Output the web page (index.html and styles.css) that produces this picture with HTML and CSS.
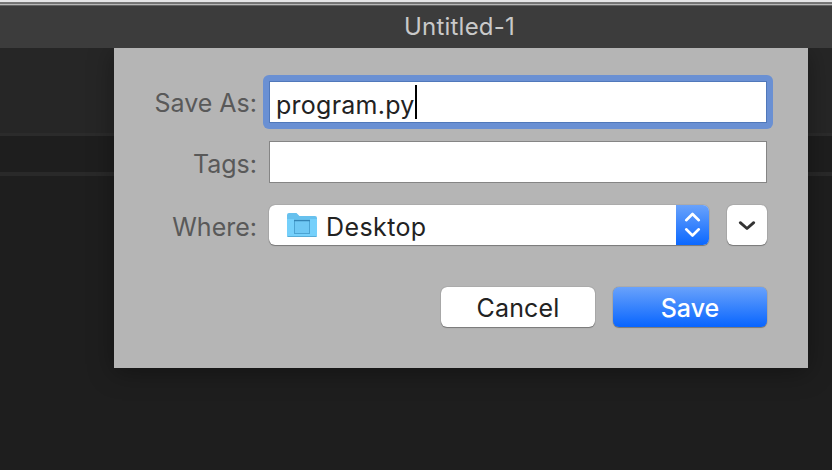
FILE: index.html
```html
<!DOCTYPE html>
<html lang="en">
<head>
<meta charset="utf-8">
<title>Untitled-1</title>
<link rel="stylesheet" href="styles.css">
</head>
<body>
<div class="window">
  <div class="menubar-edge"></div>
  <header class="titlebar"><span class="title">Untitled-1</span></header>
  <main class="editor">
    <form class="sheet">
      <div class="row">
        <span class="label label-save">Save As:</span>
        <div class="field focused"><span class="filename">program.py</span><span class="caret"></span></div>
      </div>
      <div class="row row-tags">
        <span class="label label-tags">Tags:</span>
        <div class="field"></div>
      </div>
      <div class="row row-where">
        <span class="label label-where">Where:</span>
        <div class="popup">
          <svg class="folder" width="32" height="28" viewBox="0 0 32 28">
            <path d="M1 4Q1 2 3 2H10.500L13.500 5H29Q31 5 31 7V24Q31 26 29 26H3Q1 26 1 24Z" fill="#67c1ee"/>
            <path d="M1 8H31V24Q31 26 29 26H3Q1 26 1 24Z" fill="#75d0fb"/>
            <path d="M1.500 25.500H30.500" stroke="#57acd7"/>
            <rect x="8.500" y="9.500" width="15" height="13" fill="#6fc8f4" stroke="#4ba3d2"/>
            <path d="M8 9.500H24" stroke="#3485b5" stroke-width="1.500"/>
          </svg>
          <span class="location">Desktop</span>
          <span class="stepper">
            <svg width="33" height="40" viewBox="0 0 33 40" fill="none" stroke="#fff" stroke-width="2.600" stroke-linecap="round" stroke-linejoin="round">
              <path d="M10.200 15.200L16.500 9L22.800 15.200M10.200 24.300L16.500 30.500L22.800 24.300"/>
            </svg>
          </span>
        </div>
        <div class="disclosure">
          <svg width="40" height="40" viewBox="0 0 40 40" fill="none" stroke="#333" stroke-width="2.900" stroke-linecap="round" stroke-linejoin="round">
            <path d="M13.300 17.700L20 23.500L26.700 17.700"/>
          </svg>
        </div>
      </div>
      <div class="actions">
        <div class="button"><span class="cancel-text">Cancel</span></div>
        <div class="button primary"><span class="save-text">Save</span></div>
      </div>
    </form>
  </main>
</div>
</body>
</html>
```
FILE: styles.css
```css
* { box-sizing: border-box; }
body {
  margin: 0;
  font-family: Inter, "Liberation Sans", sans-serif;
  font-size: 25px;
  line-height: 30px;
  background: #1e1e1e;
}
.window {
  height: 470px;
  display: flex;
  flex-direction: column;
  overflow: hidden;
}
.menubar-edge {
  height: 6px;
  background: linear-gradient(#e6e6e8 0 2px, #777 2px 3px, #737373 3px 4px, #b9b9b9 4px 5px, #656565 5px 6px);
}
.titlebar {
  height: 42px;
  display: flex;
  justify-content: center;
  align-items: center;
  padding: 0 1px 1px 88px;
  background: #3c3c3c;
  color: #c9c9c9;
}
.title { font-size: 24px; font-weight: 400; letter-spacing: .2px; white-space: nowrap; }
.editor {
  flex: 1;
  overflow: hidden;
  padding: 0 24px 0 114px;
  background: linear-gradient(#262626 0 85px, #2b2b2b 85px 88px, #1e1e1e 88px 124px, #292929 124px 128px, #1e1e1e 128px);
}
.sheet {
  height: 320px;
  padding: 33px 41px 0 0;
  background: #b5b5b5;
  box-shadow: 0 4px 24px rgba(0, 0, 0, .35);
}
.row { display: flex; align-items: center; height: 42px; }
.row-tags { margin-top: 18px; }
.row-where { margin-top: 22px; height: 40px; }
.label {
  width: 143px;
  margin-right: 12px;
  padding-top: 3px;
  text-align: right;
  color: #595959;
  white-space: nowrap;
}
.label-save { padding-top: 2px; }
.field {
  flex: 1;
  height: 42px;
  display: flex;
  align-items: center;
  padding: 5px 0 0 6px;
  background: #fff;
  border: 1px solid #858585;
  color: #222;
}
.filename { letter-spacing: .25px; }
.focused {
  border-color: #5078ba;
  box-shadow: 0 0 0 6px #6a90d3;
  clip-path: inset(-6px round 6px);
}
.caret { width: 2px; height: 34px; margin-top: -5px; background: #000; }
.popup {
  width: 440px;
  height: 40px;
  display: flex;
  align-items: center;
  padding-left: 17px;
  background: #fff;
  border-radius: 6px;
  overflow: hidden;
  box-shadow: 0 0 1px 0 rgba(0,0,0,.5), 0 1px 1px rgba(0,0,0,.3);
  color: #222;
}
.folder { margin-right: 8px; }
.location { padding-top: 3px; letter-spacing: .4px; }
.stepper {
  width: 33px;
  height: 40px;
  margin-left: auto;
  background: linear-gradient(#69a2fb, #0b68ff);
}
.stepper svg, .disclosure svg { display: block; }
.disclosure, .button {
  height: 40px;
  background: #fff;
  border-radius: 6px;
  box-shadow: 0 0 1px 0 rgba(0,0,0,.5), 0 1px 1px rgba(0,0,0,.3);
}
.disclosure { width: 40px; margin-left: 18px; }
.actions { display: flex; justify-content: flex-end; gap: 18px; margin-top: 42px; }
.button {
  width: 154px;
  display: flex;
  align-items: center;
  justify-content: center;
  padding-top: 1px;
  color: #222;
}
.cancel-text { letter-spacing: .15px; }
.primary { background: linear-gradient(#69a2fb, #0865ff); color: #fff; font-weight: 500; }
```
